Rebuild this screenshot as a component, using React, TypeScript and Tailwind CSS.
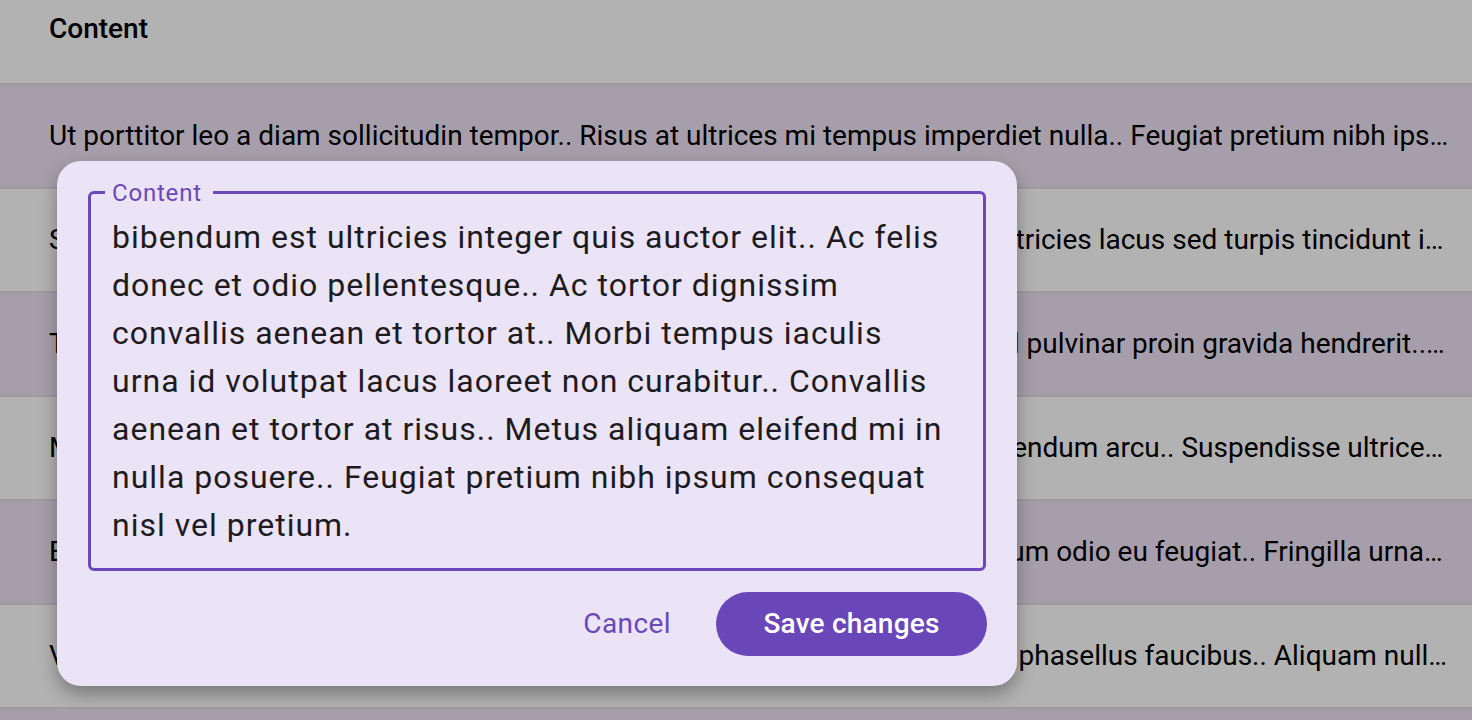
import React from 'react'

const rows = [
  'Ut porttitor leo a diam sollicitudin tempor.. Risus at ultrices mi tempus imperdiet nulla.. Feugiat pretium nibh ipsum consequat nisl vel pretium.',
  'Sed risus pretium quam vulputate dignissim suspendisse in est ante in nib.. Ultricies lacus sed turpis tincidunt id aliquet risus feugiat.',
  'Tellus in metus vulputate eu scelerisque felis imperdiet proin, fermentum.. Sed pulvinar proin gravida hendrerit..Lectus arcu bibendum.',
  'Mattis molestie a iaculis at erat pellentesque adipiscing commodo elit.. Ut bibendum arcu.. Suspendisse ultrices gravida dictum fusce.',
  'Eget nunc scelerisque viverra mauris in aliquam sem fringilla ut orci.. Elementum odio eu feugiat.. Fringilla urnaporttitor rhoncus dolor.',
  'Vitae congue mauris rhoncus aenean vel elit scelerisque mauris.. Odio ut sem phasellus faucibus.. Aliquam nulla facilisi cras fermentum.',
  'Nibh tellus molestie nunc non blandit massa enim nec dui.. Amet consectetur adipiscing elit duis tristique sollicitudin nibh sit amet.',
]

const dialogLines = [
  'bibendum est ultricies integer quis auctor elit.. Ac felis',
  'donec et odio pellentesque.. Ac tortor dignissim',
  'convallis aenean et tortor at.. Morbi tempus iaculis',
  'urna id volutpat lacus laoreet non curabitur.. Convallis',
  'aenean et tortor at risus.. Metus aliquam eleifend mi in',
  'nulla posuere.. Feugiat pretium nibh ipsum consequat',
  'nisl vel pretium.',
]

function EditDialog() {
  return (
    <div className="absolute left-[57px] top-[161px] w-[960px] h-[525px] rounded-[24px] bg-[#ebe4f6] shadow-[0_8px_18px_rgba(0,0,0,0.32)] pt-[30px] pl-[31px] pr-[30px] pb-[30px] flex flex-col">
      {/* Outlined text field */}
      <div className="relative w-[898px] h-[380px] border-[3px] border-[#6b47b9] rounded-[6px] pt-[19px] px-[21px]">
        <span className="absolute left-[14px] top-[-13px] pl-[7px] pr-[11px] bg-[#ebe4f6] text-[24px] leading-[24px] tracking-[0.8px] text-[#6b47b9]">
          Content
        </span>
        {dialogLines.map((line, i) => (
          <div key={i} className="text-[32px] leading-[48px] tracking-[1px] text-[#1d1b20] whitespace-nowrap">
            {line}
          </div>
        ))}
      </div>

      {/* Actions */}
      <div className="flex justify-end items-center gap-[21px] mt-[21px]">
        <button className="h-[64px] px-[24px] rounded-full text-[28px] tracking-[0.4px] text-[#6b47b9]">
          Cancel
        </button>
        <button className="h-[64px] w-[271px] rounded-full bg-[#6a47b9] text-[28px] font-medium tracking-[0.2px] text-white">
          Save changes
        </button>
      </div>
    </div>
  )
}

export default function App() {
  return (
    <div
      className="relative w-[1472px] h-[720px] overflow-hidden bg-[#b2b2b2]"
      style={{ fontFamily: 'Roboto, "Noto Sans", sans-serif' }}
    >
      {/* Header */}
      <div className="h-[85px] border-b-2 border-[#9c9c9c] bg-[#b2b2b2] pl-[49px] pt-[12px]">
        <span className="text-[28px] leading-[34px] font-medium text-black">Content</span>
      </div>

      {/* Rows */}
      {rows.map((text, i) => (
        <div
          key={i}
          className={
            'h-[104px] border-b-2 border-[#9c9c9c] flex items-center pl-[49px] pr-[20px] ' +
            (i % 2 === 0 ? 'bg-[#a69fab]' : 'bg-[#b2b2b2]')
          }
        >
          <span className="block w-full overflow-hidden text-ellipsis whitespace-nowrap text-[28px] leading-[34px] text-black">
            {text}
          </span>
        </div>
      ))}

      <EditDialog />
    </div>
  )
}
